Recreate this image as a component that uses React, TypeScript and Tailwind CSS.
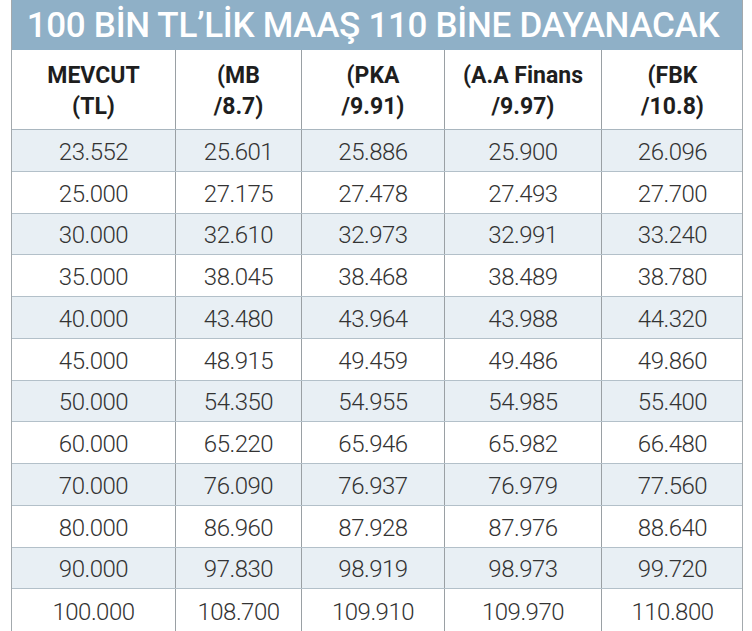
const headers = [
  ["MEVCUT", "(TL)"],
  ["(MB", "/8.7)"],
  ["(PKA", "/9.91)"],
  ["(A.A Finans", "/9.97)"],
  ["(FBK", "/10.8)"],
];

const rows = [
  ["23.552", "25.601", "25.886", "25.900", "26.096"],
  ["25.000", "27.175", "27.478", "27.493", "27.700"],
  ["30.000", "32.610", "32.973", "32.991", "33.240"],
  ["35.000", "38.045", "38.468", "38.489", "38.780"],
  ["40.000", "43.480", "43.964", "43.988", "44.320"],
  ["45.000", "48.915", "49.459", "49.486", "49.860"],
  ["50.000", "54.350", "54.955", "54.985", "55.400"],
  ["60.000", "65.220", "65.946", "65.982", "66.480"],
  ["70.000", "76.090", "76.937", "76.979", "77.560"],
  ["80.000", "86.960", "87.928", "87.976", "88.640"],
  ["90.000", "97.830", "98.919", "98.973", "99.720"],
  ["100.000", "108.700", "109.910", "109.970", "110.800"],
];

const cols = "grid grid-cols-[163px_126px_143px_157px_142px]";

export default function App() {
  return (
    <div className="h-[631px] w-[752px] overflow-hidden bg-white pl-[11px] font-['Roboto',sans-serif]">
      <div className="w-[732px] border-r border-l border-[#a3a9ad]">
        {/* başlık */}
        <div className="flex h-[50px] items-center justify-center overflow-hidden bg-[#8fb0c7] pr-[8px]">
          <span className="inline-block whitespace-nowrap text-[35px] font-medium leading-none tracking-[-0.3px] text-white">
            100 BİN TL’LİK MAAŞ 110 BİNE DAYANACAK
          </span>
        </div>

        <div className={`${cols} h-[80px] border-b border-[#a9b6bf] bg-white`}>
          {headers.map((h, i) => (
            <div
              key={i}
              className={`flex flex-col items-center justify-center pt-[2px] text-[23px] font-bold leading-[31px] text-[#1e1e1e] ${
                i > 0 ? "border-l border-[#9aa0a4]" : ""
              }`}
            >
              <span>{h[0]}</span>
              <span>{h[1]}</span>
            </div>
          ))}
        </div>

        {rows.map((r, ri) => (
          <div
            key={ri}
            className={`${cols} h-[41.75px] ${
              ri < rows.length - 1 ? "border-b border-[#b3c0c9]" : ""
            } ${ri % 2 === 0 ? "bg-[#e8eff4]" : "bg-white"}`}
          >
            {r.map((v, ci) => (
              <div
                key={ci}
                className={`flex items-center justify-center pt-[3px] text-[24px] font-light tracking-[-0.5px] text-[#333333] ${
                  ci > 0 ? "border-l border-[#9aa0a4]" : ""
                }`}
              >
                {v}
              </div>
            ))}
          </div>
        ))}
      </div>
    </div>
  );
}
